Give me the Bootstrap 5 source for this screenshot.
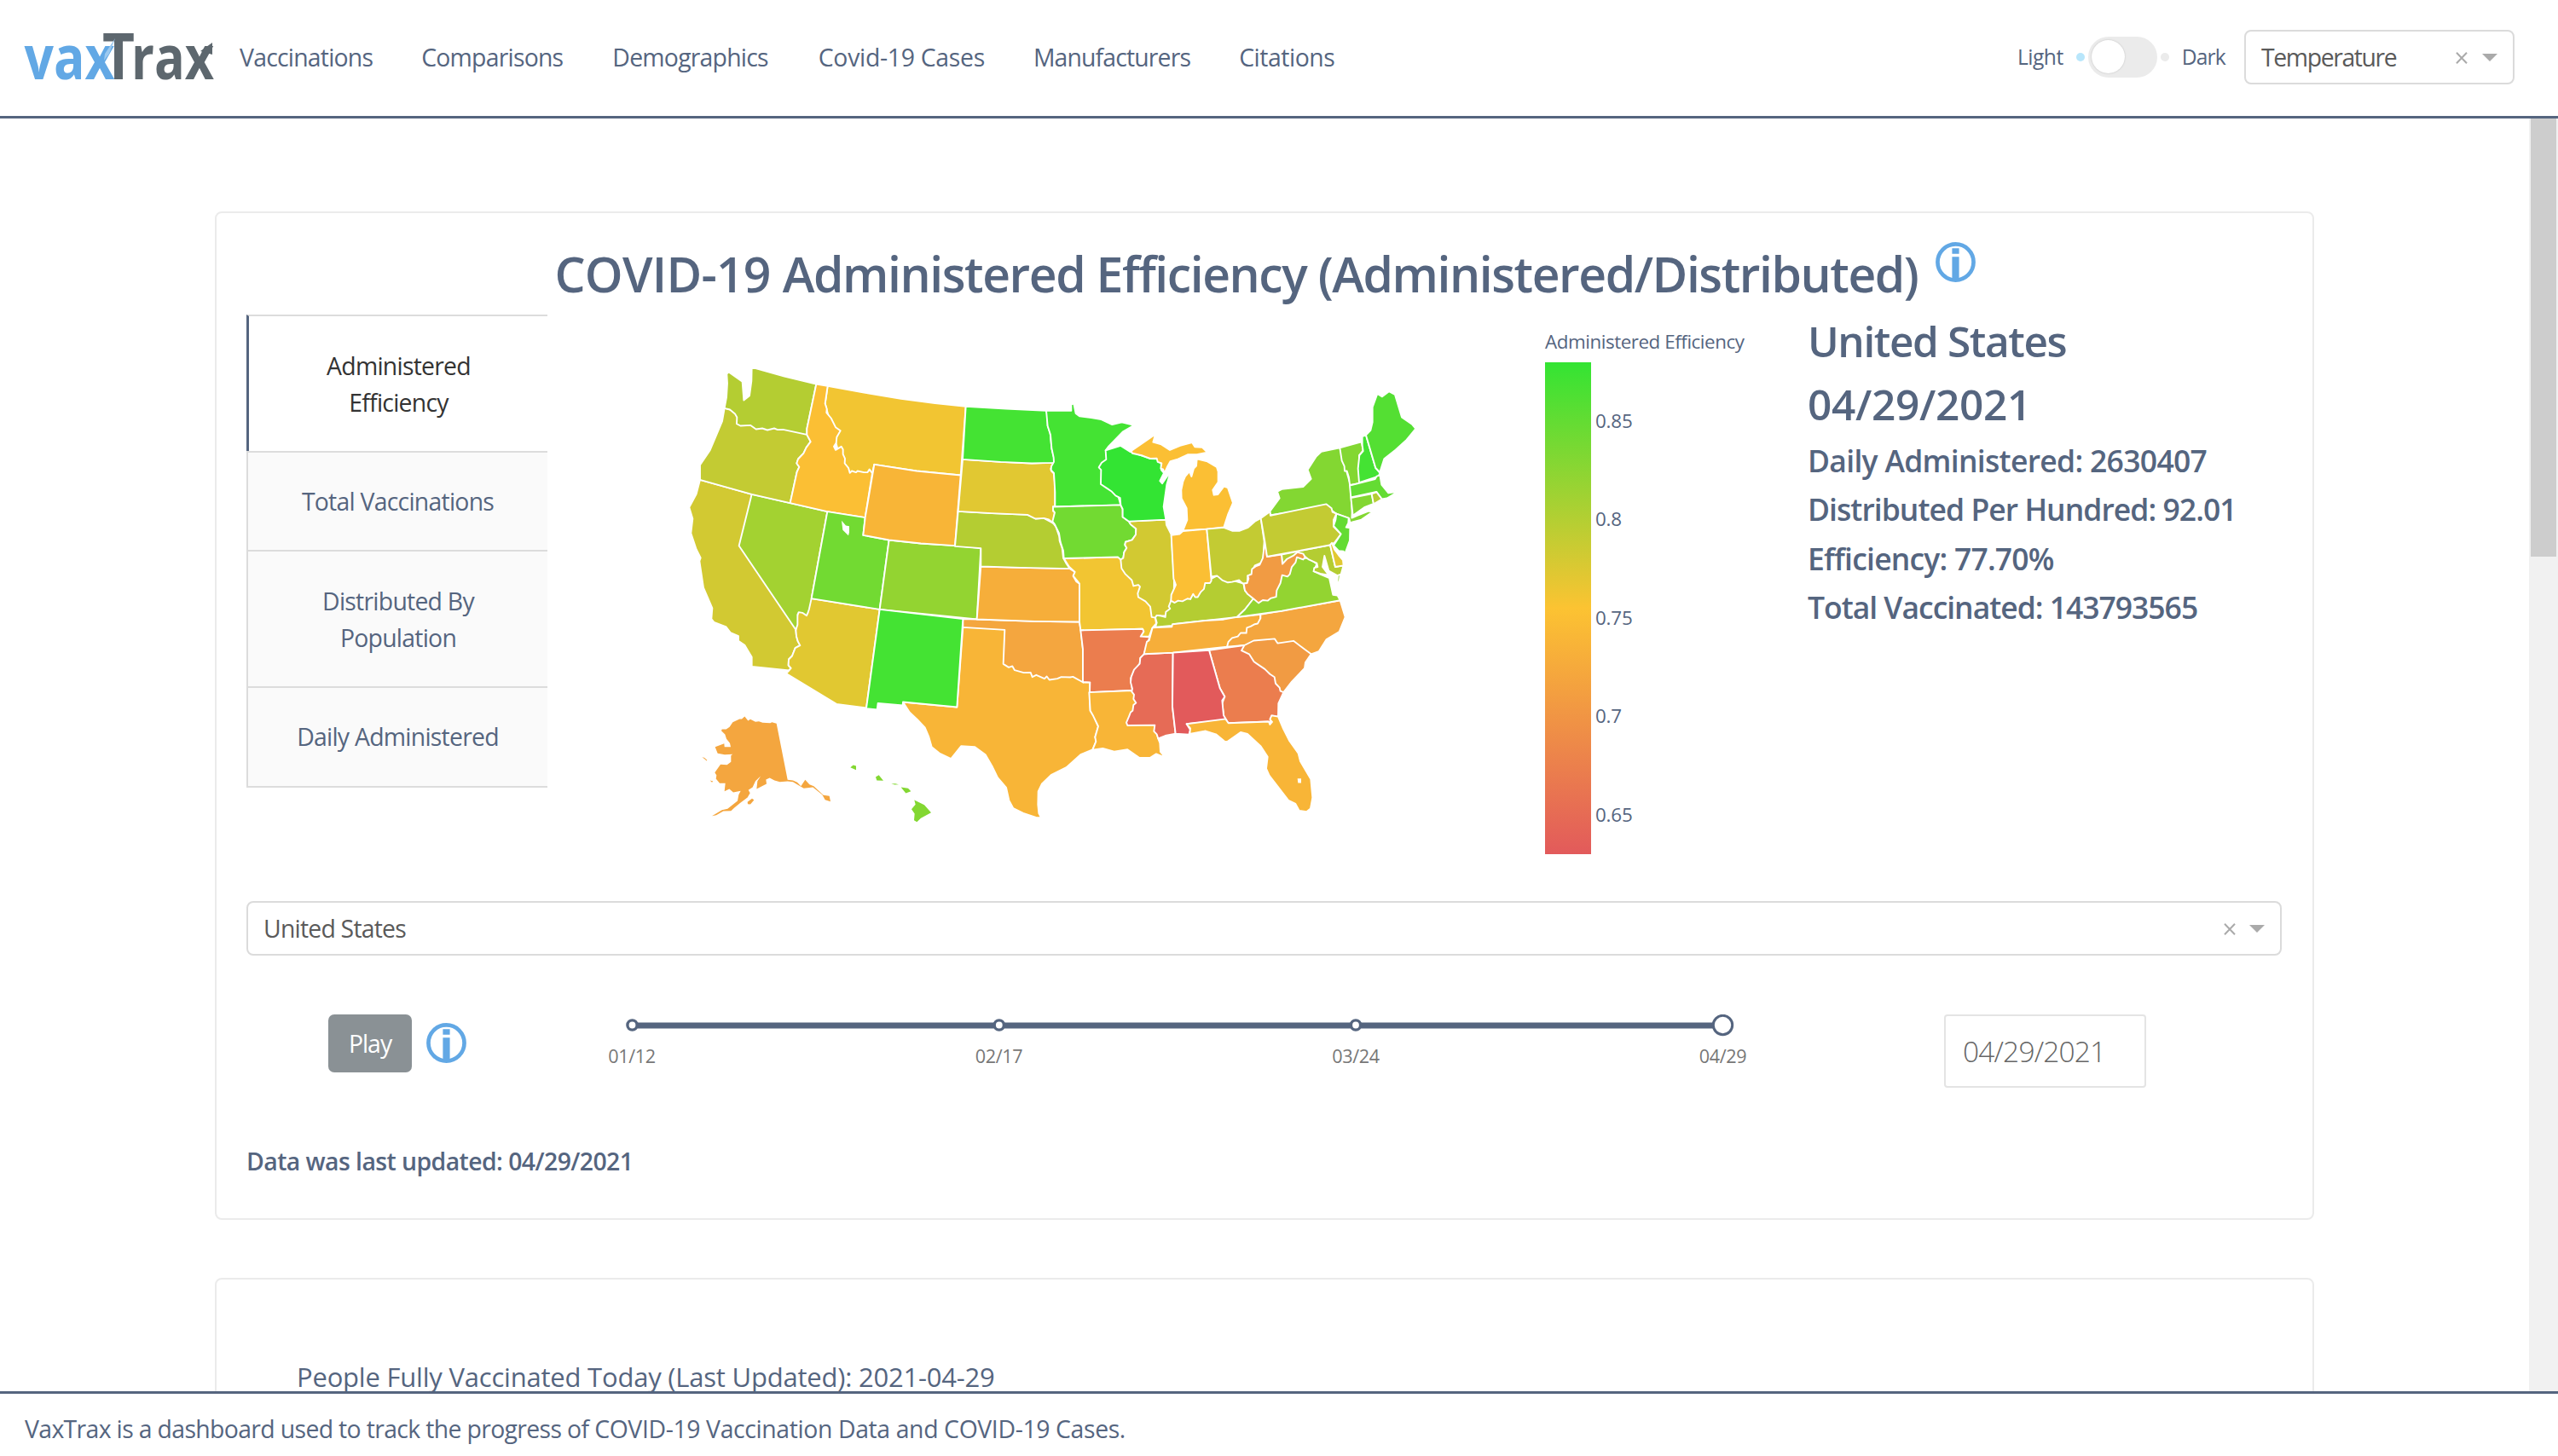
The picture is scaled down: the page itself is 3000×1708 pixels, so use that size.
<!DOCTYPE html>
<html lang="en">
<head>
<meta charset="utf-8">
<title>vaxTrax</title>
<link href="https://cdn.jsdelivr.net/npm/bootstrap@5.3.0/dist/css/bootstrap.min.css" rel="stylesheet">
<script src="https://cdn.jsdelivr.net/npm/bootstrap@5.3.0/dist/js/bootstrap.bundle.min.js"></script>
<style>
body{height:1708px;overflow:hidden;font-family:"Open Sans","Noto Sans",sans-serif;font-size:28.4px;letter-spacing:-.78px;color:#55657f;background:#fff}
.topbar{height:139px;border-bottom:3px solid #55657f;padding:0 51px 2px 28px}
.brandmark{width:225px;height:60px;overflow:visible}
.topbar .nav-link{padding:0 0 0 28px;color:#55657f;white-space:nowrap}
.topbar .navbar-nav{margin-left:0}
.mode-label{font-size:24.6px;letter-spacing:-.5px}
.pip{width:10px;height:10px;border-radius:50%;background:#ebebeb}
.pip-on{background:#b8e6fb}
.mode-switch{width:81px;height:48px;border-radius:24px;background:#ebebeb;padding:4px}
.mode-knob{width:39px;height:39px;border-radius:50%;background:#fff;box-shadow:0 0 2px #bbb}
.pick{height:64px;border:2px solid #dbdbdb;border-radius:8px;color:#5a5a5a;padding:1px 18px 0}
.pick-theme{width:317px;letter-spacing:-1.4px}
.main-view{height:1493px;overflow:hidden}
.panel{width:2462px;border:2px solid #ebebeb;border-radius:8px;background:#fff}
.panel-one{height:1183px;margin-top:109px;padding:31px 36px 0 35px}
.panel-two{height:400px;margin-top:68px;padding:91px 94px 0}
.panel-two p{font-size:31px;line-height:46px;letter-spacing:-.21px}
.panel-title{font-size:57px;line-height:80px;font-weight:600;letter-spacing:-1.43px}
.title-row{height:88px;margin-left:2px}
.info-dot{width:47px;height:47px;margin-left:20px;margin-top:3px}
.side-tabs{width:353px}
.side-tabs .tab-item{border:solid #dcdcdc;border-width:2px 0 0 2px;background:#fafafa;padding:1px 62px 0 63px;text-align:center;line-height:43px;letter-spacing:-.75px}
.side-tabs .tab-now{background:#fff;color:#333;border-left:3px solid #55657f}
.side-tabs .tab-end{border-bottom-width:2px}
.h-two{height:160px}.h-one{height:116px}
.upper{height:688px}
.graph{width:1480px;height:660px}
.facts{font-weight:600;white-space:nowrap;font-size:35.5px;line-height:43px;margin-left:-2px;padding-top:2px}
.facts .big{font-size:49.5px;line-height:59px;margin-bottom:15px}
.facts .stat{margin-bottom:14.4px}
.controls{margin-top:69px;padding-left:96px;height:86px}
.btn-play{width:98px;height:68px;background:#8a9195;color:#fff;font-size:28.4px;letter-spacing:-1px;border:0;border-radius:7px;padding:0}
.track{width:1400px;height:76px;margin-left:133px}
.date-box{width:237px;height:86px;border:2px solid #e4e4e4;border-radius:4px;font-size:33.5px;font-weight:300;letter-spacing:-.85px;color:#666;padding:1px 0 0 20px;margin-left:200px}
.updated{margin-top:66px;line-height:40px;font-weight:600;letter-spacing:-.57px}
.scroll-lane{width:34px;background:#f1f1f1;padding:0 2px}
.scroll-grip{height:514px;background:#cdcdcd}
.bottombar{height:76px;border-top:3px solid #55657f;padding:9px 0 0 29px;letter-spacing:-.65px;white-space:pre}
</style>
</head>
<body class="d-flex flex-column">
<svg width="0" height="0" class="position-absolute"><defs>
<symbol id="info" viewBox="0 0 46 46"><g fill="none" stroke="#62a8e5"><circle cx="23" cy="23" r="20.6" stroke-width="4.6"/></g><path fill="#62a8e5" d="M19 7h8v6.5h-8zM19 17h8v26h-8z"/></symbol>
<symbol id="clr" viewBox="0 0 14 14"><path d="M1 .8l12 12.4M13 .8L1 13.2" stroke="#aaa" stroke-width="2" fill="none"/></symbol>
<symbol id="tri" viewBox="0 0 18 9"><path d="M0 0h18l-9 9z" fill="#aaa"/></symbol>
</defs></svg>

<header class="topbar navbar flex-nowrap justify-content-start flex-shrink-0">
  <svg class="brandmark flex-shrink-0" viewBox="28 38 225 60" font-family="Open Sans, sans-serif" letter-spacing="0">
    <g font-weight="700">
      <text x="28.5" y="94" font-size="71" fill="#62a8e5" textLength="106" lengthAdjust="spacingAndGlyphs">vax</text>
      <text x="120" y="94" font-size="75" fill="#5d676e" textLength="38" lengthAdjust="spacingAndGlyphs">T</text>
      <text x="154" y="94" font-size="71" fill="#5d676e" textLength="97" lengthAdjust="spacingAndGlyphs">rax</text>
    </g>
    <path d="M123 64L135 46L128 64L122 72z" fill="#9cc9ef"/>
    <path d="M235 61L249 51V65z" fill="#5d676e"/>
  </svg>
  <nav class="navbar-nav flex-row">
    <a class="nav-link">Vaccinations</a>
    <a class="nav-link" style="margin-left:29px">Comparisons</a>
    <a class="nav-link" style="margin-left:30px">Demographics</a>
    <a class="nav-link" style="margin-left:31px;letter-spacing:-.3px">Covid-19 Cases</a>
    <a class="nav-link" style="margin-left:29px;letter-spacing:-.85px">Manufacturers</a>
    <a class="nav-link" style="margin-left:29px;letter-spacing:-.45px">Citations</a>
  </nav>
  <div class="d-flex align-items-center ms-auto">
    <span class="mode-label">Light</span>
    <span class="pip pip-on" style="margin:0 4px 0 15px"></span>
    <span class="mode-switch"><span class="mode-knob d-block"></span></span>
    <span class="pip" style="margin:0 15px 0 4px"></span>
    <span class="mode-label" style="letter-spacing:-.8px">Dark</span>
    <div class="pick pick-theme d-flex align-items-center" style="margin-left:22px">
      <span class="me-auto">Temperature</span>
      <svg width="14" height="14"><use href="#clr"/></svg><svg width="18" height="9" style="margin-left:17px"><use href="#tri"/></svg>
    </div>
  </div>
</header>

<div class="main-view d-flex">
  <main class="flex-grow-1 d-flex flex-column align-items-center">
    <section class="panel panel-one flex-shrink-0">
      <div class="title-row d-flex justify-content-center">
        <h1 class="panel-title mb-0"><span style="letter-spacing:-.75px">COVID-19 </span>Administered Efficiency (Administered/Distributed)</h1>
        <svg class="info-dot"><use href="#info"/></svg>
      </div>
      <div class="upper d-flex">
        <div class="side-tabs">
          <div class="tab-item tab-now h-two d-flex align-items-center justify-content-center">Administered Efficiency</div>
          <div class="tab-item h-one d-flex align-items-center justify-content-center" style="padding:0 20px">Total Vaccinations</div>
          <div class="tab-item h-two d-flex align-items-center justify-content-center">Distributed By Population</div>
          <div class="tab-item tab-end h-one d-flex align-items-center justify-content-center" style="height:119px;padding:0 20px">Daily Administered</div>
        </div>
        <svg class="graph flex-shrink-0" viewBox="642 369.5 1480 660">
          <defs><linearGradient id="scale" x1="0" y1="0" x2="0" y2="1"><stop offset="0" stop-color="#33e433"/><stop offset=".5" stop-color="#fcc332"/><stop offset="1" stop-color="#e25a5b"/></linearGradient></defs>
          <style>#usa polygon{stroke:#fff;stroke-width:1.9px;vector-effect:non-scaling-stroke;stroke-linejoin:round}#usa .isle{stroke:none}</style>
          <g id="usa">
          <g transform="translate(780 400) scale(.33333)">
            <polygon fill="#d2c932" points="123,490 305,541 500,600 520,960 460,1018 462,1040 467,1058 475,1073 458,1082 447,1110 435,1122 434,1143 443,1153 436,1161 305,1147 305,1114 280,1072 258,1057 258,1040 230,1028 215,1008 172,991 163,980 166,942 135,870 121,776 125,765 110,735 91,678 97,627 85,587 110,540"/>
            <polygon fill="#e1c831" points="515,908 755,946 708,1293 603,1279 426,1172 436,1161 443,1153 434,1143 435,1122 447,1110 458,1082 475,1073 467,1058 462,1040 460,1018 466,965 470,956"/>
            <polygon fill="#a3d231" points="305,541 440,572 571,602 515,908 507,944 503,957 498,968 483,958 470,956 466,965 466,1000 460,1018 260,722"/>
            <polygon fill="#c3cb33" points="209,238 499,310 499,331 512,356 497,376 487,397 468,417 463,432 472,445 464,462 440,572 305,541 123,490 123,438 158,386 201,284"/>
            <polygon fill="#b4cd32" points="217,118 223,110 272,145 277,210 297,194 304,142 305,94 420,126 532,153 499,310 499,331 415,313 396,314 384,309 360,315 342,309 320,312 300,298 265,300 252,293 253,270 246,258 228,243 209,238 216,200 219,150"/>
            <polygon fill="#f2c532" points="572,160 700,183 830,205 950,221 1058,232 1040,474 885,459 736,436 729,467 640,500 563,222"/>
            <polygon fill="#fbbf34" points="532,153 572,160 563,222 569,240 568,254 584,273 600,305 617,317 604,340 602,360 594,373 600,385 620,373 626,383 626,400 633,415 632,432 645,448 650,466 657,459 672,464 677,459 700,464 712,464 719,453 729,467 704,623 571,602 440,572 464,462 472,445 463,432 468,417 487,397 497,376 512,356 499,331 499,310"/>
            <polygon fill="#72da32" points="571,602 704,623 697,685 788,702 755,946 515,908"/>
            <polygon fill="#fff" class="isle" points="621,634 636,651 648,653 648,675 645,686 625,667"/>
            <polygon fill="#93d431" points="788,702 900,714 1020,722 1111,731 1097,981 755,946"/>
            <polygon fill="#f8b537" points="736,436 885,459 1040,474 1020,722 900,714 788,702 697,685 704,623"/>
            <polygon fill="#f8b537" points="1048,1009 1471,1009 1471,1203 1495,1203 1494,1238 1496,1303 1505,1313 1524,1358 1513,1395 1517,1410 1504,1440 1462,1457 1412,1502 1358,1529 1326,1560 1313,1587 1312,1633 1315,1664 1323,1679 1305,1678 1260,1663 1225,1646 1210,1618 1200,1573 1170,1538 1150,1497 1127,1457 1090,1430 1042,1427 1006,1472 965,1452 938,1430 928,1395 914,1362 887,1333 860,1308 837,1272 1027,1290"/>
            <polygon fill="#f4a63f" points="1048,980 1097,981 1300,988 1458,990 1463,1021 1470,1087 1471,1203 1435,1183 1425,1185 1394,1184 1380,1190 1352,1194 1343,1182 1335,1190 1306,1177 1292,1184 1286,1168 1262,1169 1230,1160 1222,1146 1209,1150 1190,1138 1195,1018 1048,1009"/>
            <polygon fill="#44e333" points="755,946 1048,980 1027,1290 837,1272 836,1284 749,1276 746,1299 708,1295"/>
            <polygon fill="#f6ae3a" points="1111,795 1250,799 1424,803 1442,814 1436,829 1447,848 1458,856 1458,990 1300,988 1097,981"/>
            <polygon fill="#b4cd32" points="1031,601 1150,608 1275,613 1303,627 1333,625 1366,643 1375,655 1387,690 1388,705 1397,730 1401,765 1410,782 1424,803 1250,799 1111,795 1111,731 1020,724"/>
            <polygon fill="#e1c832" points="1047,418 1180,427 1290,432 1367,429 1366,437 1357,450 1359,459 1368,468 1372,510 1372,583 1365,584 1365,600 1371,605 1366,643 1350,630 1333,625 1303,627 1275,613 1150,608 1031,601"/>
            <polygon fill="#44e333" points="1058,232 1200,240 1341,247 1346,265 1346,300 1355,325 1360,380 1368,412 1368,430 1290,432 1180,427 1047,418"/>
          </g>
          <g transform="translate(1200 440) scale(.33333 .34435)">
            <polygon fill="#44e333" points="81,122 169,123 169,101 178,99 185,132 199,142 240,147 275,153 313,170 347,162 390,172 350,195 299,246 290,258 343,444 112,450 112,400 108,335 98,325 99,312 108,297 107,282 100,250 96,205 86,175"/>
            <polygon fill="#f2c532" points="143,626 333,621 430,700 465,828 468,848 455,862 443,892 413,892 424,875 420,866 202,871 198,842 198,712 176,686 182,672 162,655"/>
            <polygon fill="#eb7d4e" points="202,871 420,866 424,875 413,892 445,894 440,908 425,952 412,965 410,985 390,1010 378,1035 384,1076 234,1082 235,1048 210,1047 210,935"/>
            <polygon fill="#f8b537" points="232,1082 384,1076 450,1140 475,1240 481,1255 483,1285 493,1296 490,1301 468,1292 447,1305 408,1305 367,1277 320,1284 280,1273 244,1278 256,1250 253,1235 264,1198 245,1160 236,1145"/>
            <polygon fill="#e66b56" points="425,952 527,947 525,1130 536,1223 500,1230 475,1240 470,1225 460,1215 463,1194 367,1195 363,1185 372,1165 378,1150 385,1145 388,1125 397,1118 388,1105 390,1090 382,1080 384,1070 378,1048 380,1030 390,1005 410,985 412,965"/>
            <polygon fill="#72da32" points="105,450 343,444 350,458 350,485 372,500 378,510 397,525 396,545 383,563 360,570 358,580 364,590 355,605 352,625 343,630 333,621 143,626 141,600 131,570 126,540 111,510 103,500 111,470 105,462"/>
            <polygon fill="#d2c932" points="372,500 502,494 504,512 521,545 531,695 530,780 500,822 485,822 470,820 465,828 452,826 447,790 430,772 405,758 403,745 411,722 405,716 388,720 382,700 360,680 346,660 343,630 352,625 355,605 364,590 358,580 360,570 383,563 396,545 397,525 378,510"/>
            <polygon fill="#33e433" points="290,258 343,242 375,262 395,268 447,286 470,287 485,300 486,325 495,335 481,362 489,371 519,329 505,375 494,450 502,494 372,500 350,485 350,458 343,444 341,420 325,412 310,397 296,388 273,373 274,324 266,316 276,300 292,289"/>
            <polygon fill="#fbbf34" points="380,260 465,203 457,230 486,238 516,257 552,242 594,231 604,246 630,248 648,265 611,272 580,272 541,289 518,295 508,312 497,336 492,322 484,320 487,302 473,297 470,285 447,286 420,276 384,268"/>
            <polygon fill="#fbbf34" points="611,287 648,296 681,315 686,330 686,366 667,393 671,410 685,408 706,381 720,385 738,437 721,475 706,520 646,526 562,531 577,495 575,455 557,422 556,393 562,365 570,347 585,330 592,347 600,320 609,311"/>
            <polygon fill="#b4cd32" points="662,695 682,685 775,712 780,735 810,763 780,800 752,826 530,850 523,855 465,860 470,845 465,828 470,820 485,822 500,826 502,808 517,797 512,790 521,768"/>
            <polygon fill="#fbbf34" points="521,547 550,543 562,533 646,526 662,702 657,710 640,710 636,730 625,740 614,758 605,758 598,747 588,765 578,763 560,772 545,770 533,777 520,770 521,750 537,716 529,695"/>
            <polygon fill="#c3cb33" points="646,526 706,521 735,532 762,532 791,521 815,500 836,489 848,568 845,625 840,640 815,650 805,670 803,680 790,685 788,710 775,712 768,708 760,700 735,706 720,708 700,700 682,685 662,688"/>
            <polygon fill="#f6ae3a" points="455,862 523,859 525,850 640,838 705,834 752,826 835,817 832,900 717,927 527,947 425,952 430,930 435,910 443,905"/>
            <polygon fill="#f4a63f" points="835,817 1115,769 1133,826 1112,876 1067,902 1040,943 1013,952 900,960 778,922 717,927 722,910 735,897 755,892 765,880 785,880 787,862 800,858 815,850 825,848 835,830"/>
            <polygon fill="#eb7d4e" points="654,939 717,930 778,922 870,960 916,1082 898,1120 897,1165 874,1163 870,1183 860,1182 722,1187 706,1165 700,1120 709,1097 692,1068"/>
            <polygon fill="#f19b43" points="778,922 811,906 885,900 895,915 951,907 1013,952 993,980 990,1000 945,1046 916,1082 905,1078 902,1066 888,1052 884,1030 868,1020 850,1003 830,990 812,978 795,952 768,940"/>
            <polygon fill="#e25a5b" points="527,947 654,939 692,1068 709,1097 700,1110 705,1160 715,1177 575,1190 588,1210 583,1226 536,1223 525,1130"/>
            <polygon fill="#f8b537" points="575,1190 712,1173 722,1187 864,1182 868,1192 876,1183 868,1174 874,1161 897,1165 915,1206 937,1248 968,1290 975,1317 1012,1378 1018,1441 1011,1478 997,1489 971,1485 958,1462 933,1450 866,1366 855,1342 860,1302 836,1266 789,1224 765,1218 718,1250 708,1249 678,1225 642,1214 586,1224 588,1205"/>
            <polygon fill="#fff" class="isle" points="965,1376 978,1376 978,1391 967,1391"/>
            <polygon fill="#93d431" points="752,826 780,800 810,763 880,700 963,620 985,625 1005,625 1033,645 1022,670 1045,680 1077,693 1090,750 1106,752 1115,769 910,805"/>
            <polygon fill="#93d431" points="1107,682 1116,680 1113,700 1103,727"/>
            <polygon fill="#b4cd32" points="909,613 1080,580 1098,655 1127,650 1118,680 1105,684 1075,668 1060,617 1053,655 1075,683 1045,678 1022,670 1024,658 1036,655 1033,642 1005,630 985,615 965,620 912,648"/>
            <polygon fill="#f19b43" points="850,568 858,620 909,613 912,645 928,628 950,617 965,605 985,610 992,622 985,630 963,622 958,640 945,655 938,680 930,688 911,683 905,710 892,735 890,757 870,762 860,770 843,768 828,778 810,763 790,748 780,735 776,712 788,710 793,695 790,685 803,680 805,662 820,652 832,648 843,625"/>
            <polygon fill="#83d732" points="870,478 868,466 902,421 894,398 910,390 985,382 1013,355 1001,324 1030,280 1049,262 1114,249 1152,378 1157,470 1156,488 1175,480 1215,465 1229,468 1190,494 1150,504 1147,490 1102,474 1068,450"/>
            <polygon fill="#c3cb33" points="836,489 868,467 870,480 1066,441 1085,455 1088,468 1102,474 1092,495 1092,518 1118,543 1095,572 1082,580 858,620 850,568"/>
            <polygon fill="#e1c832" points="1080,580 1086,573 1095,595 1110,615 1125,632 1127,650 1098,655"/>
            <polygon fill="#64dc33" points="1102,474 1145,488 1144,505 1136,520 1150,522 1149,565 1132,610 1127,602 1110,600 1092,582 1118,543 1092,515 1099,495"/>
            <polygon fill="#83d732" points="1114,249 1190,229 1196,258 1182,275 1182,370 1149,376 1146,350 1139,328 1131,328 1130,312 1121,293"/>
            <polygon fill="#44e333" points="1193,211 1206,206 1240,318 1255,335 1250,346 1182,368 1178,320 1183,275 1196,260 1193,240"/>
            <polygon fill="#54df33" points="1206,206 1222,190 1229,162 1229,111 1246,65 1263,75 1287,57 1308,68 1332,145 1369,170 1381,184 1349,222 1310,256 1270,287 1255,332 1240,318"/>
            <polygon fill="#64dc33" points="1149,378 1238,356 1244,346 1255,342 1261,375 1285,403 1306,400 1302,386 1310,392 1311,403 1280,421 1262,424 1243,399 1153,418"/>
            <polygon fill="#83d732" points="1153,420 1226,406 1233,440 1200,452 1160,480"/>
            <polygon fill="#b4cd32" points="1226,406 1243,400 1262,424 1233,441"/>
          </g>
          <g transform="translate(780 780) scale(.33333)">
            <polygon class="isle" fill="#f4a63f" points="200,228 215,228 227,220 238,203 262,192 270,192 280,183 292,198 300,193 318,202 330,200 343,205 370,206 376,203 392,208 431,406 450,408 465,415 478,428 493,406 508,422 523,428 557,460 578,463 582,482 563,476 553,458 520,432 488,436 470,425 450,413 431,411 404,413 385,408 368,399 355,405 357,420 322,438 325,410 332,400 336,393 318,410 308,432 293,442 299,452 290,468 263,488 243,505 232,515 205,516 180,530 165,533 200,512 220,508 255,480 259,458 266,445 240,450 226,438 209,446 212,418 192,418 179,402 181,390 175,380 195,352 218,353 232,343 232,320 238,316 210,317 185,313 176,290 208,278 209,290 231,290 228,277 216,262 211,246 198,233"/>
            <path fill="#f4a63f" d="M290 484l16-12 7 5-13 15-9-1zM130 327l8 1 10 9-2 2-9-8zM158 408l11 3-4 4z"/>
            <path fill="#83d732" d="M652 362l10-8 10 3v14zM741 396l11-7 16 20-23-1zM796 420l14-1 12 3-14 1zM830 432l25 4 10 10-18 7zM877 477l35 17 24 27-36 20-14 13-10-6 2-23-11-16 14-16z"/>
          </g>
          </g>
          <rect x="1812" y="425.5" width="54" height="577" fill="url(#scale)"/>
          <g font-size="22.4" fill="#55657f">
            <text x="1812" y="409" letter-spacing="-.45">Administered Efficiency</text>
            <g letter-spacing="-.2"><text x="1871" y="502">0.85</text><text x="1871" y="617">0.8</text><text x="1871" y="733">0.75</text><text x="1871" y="848">0.7</text><text x="1871" y="964">0.65</text></g>
          </g>
        </svg>
        <div class="facts">
          <div class="big" style="letter-spacing:-1.4px">United States</div>
          <div class="big" style="letter-spacing:-.3px">04/29/2021</div>
          <div class="stat" style="letter-spacing:-.7px">Daily Administered: 2630407</div>
          <div class="stat" style="letter-spacing:-.96px">Distributed Per Hundred: 92.01</div>
          <div class="stat" style="letter-spacing:-.8px">Efficiency: 77.70%</div>
          <div class="stat" style="letter-spacing:-1.02px">Total Vaccinated: 143793565</div>
        </div>
      </div>
      <div class="pick d-flex align-items-center">
        <span class="me-auto">United States</span>
        <svg width="14" height="14"><use href="#clr"/></svg><svg width="18" height="9" style="margin-left:16px"><use href="#tri"/></svg>
      </div>
      <div class="controls d-flex align-items-start">
        <button class="btn btn-play">Play</button>
        <svg class="info-dot" style="margin:10px 0 0 17px"><use href="#info"/></svg>
        <svg class="track" viewBox="680 1190 1400 76">
          <rect x="741" y="1199.5" width="1279" height="7" fill="#55657f"/>
          <g fill="#fff" stroke="#55657f" stroke-width="3.4"><circle cx="741.5" cy="1202.5" r="5.6"/><circle cx="1171.8" cy="1202.5" r="5.6"/><circle cx="1590" cy="1202.5" r="5.6"/><circle cx="2020.5" cy="1202.5" r="11.2" stroke-width="3"/></g>
          <g font-size="21.6" fill="#777" text-anchor="middle" letter-spacing="-.35"><text x="741" y="1247">01/12</text><text x="1171.5" y="1247">02/17</text><text x="1590" y="1247">03/24</text><text x="2020.5" y="1247">04/29</text></g>
        </svg>
        <div class="date-box d-flex align-items-center">04/29/2021</div>
      </div>
      <div class="updated">Data was last updated: 04/29/2021</div>
    </section>
    <section class="panel panel-two flex-shrink-0"><p>People Fully Vaccinated Today (Last Updated): 2021-04-29</p></section>
  </main>
  <div class="scroll-lane"><div class="scroll-grip"></div></div>
</div>

<footer class="bottombar d-flex align-items-center flex-shrink-0"><span>VaxTrax is a dashboard used to track the progress of <span style="letter-spacing:-.38px">COVID-19 Vaccination Data and COVID-19 Cases.</span></span></footer>
</body>
</html>
